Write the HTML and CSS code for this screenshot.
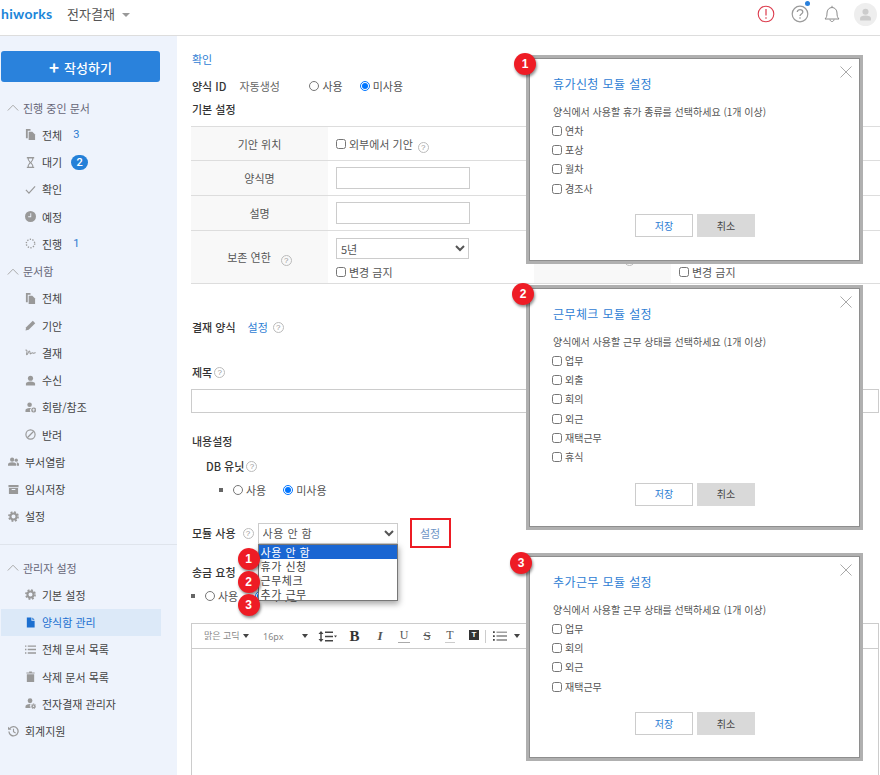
FILE: index.html
```html
<!DOCTYPE html>
<html lang="ko">
<head>
<meta charset="utf-8">
<title>전자결재</title>
<link rel="stylesheet" href="styles.css">
</head>
<body>
<svg class="sprite" xmlns="http://www.w3.org/2000/svg">
  <symbol id="i-docs" viewBox="0 0 12 12"><path d="M1 0h5v2H3v8H1z"/><path d="M4 3h4l3 3v6H4z"/></symbol>
  <symbol id="i-glass" viewBox="0 0 12 12"><path d="M2 0h8v1.500H9V3L7 6l2 3v1.500h1V12H2v-1.500h1V9l2-3-2-3V1.500H2zM4.200 1.500V3L6 5.400 7.800 3V1.500zM6 6.800 4.200 9v1.500h3.600V9z" fill-rule="evenodd"/></symbol>
  <symbol id="i-check" viewBox="0 0 12 12"><path d="M1 6.500 4.300 10 11 2.500" fill="none" stroke="currentColor" stroke-width="1.300"/></symbol>
  <symbol id="i-clock" viewBox="0 0 12 12"><path d="M6 0a6 6 0 1 0 0 12A6 6 0 0 0 6 0zm.8 6.800H3.500V5.800h2.300V2.500h1z" fill-rule="evenodd"/></symbol>
  <symbol id="i-spin" viewBox="0 0 12 12"><circle cx="6" cy="6" r="4.600" fill="none" stroke="currentColor" stroke-width="1.500" stroke-dasharray="1.400 1.500"/></symbol>
  <symbol id="i-pen" viewBox="0 0 12 12"><path d="M8.500.8 11.200 3.500 4 10.700.6 11.400 1.300 8z"/></symbol>
  <symbol id="i-sign" viewBox="0 0 12 12"><path d="M.5 3.500C2 3 2.500 4 2 6S1.500 9 2.500 8 4 4 5 4.500 5 8 6 7.500 7.500 6 8.500 6.500 10 7 11.500 6" fill="none" stroke="currentColor" stroke-width="1.100"/></symbol>
  <symbol id="i-user" viewBox="0 0 12 12"><circle cx="6" cy="3.500" r="2.800"/><path d="M1 11.500V9.500C1 8 3 7 6 7s5 1 5 2.500v2z"/></symbol>
  <symbol id="i-userplus" viewBox="0 0 12 12"><circle cx="5" cy="3" r="2.500"/><path d="M.5 11V9c0-1.500 2-2.500 4.500-2.500.7 0 1.200.1 1.700.2A3.200 3.200 0 0 0 6 11z"/><path d="M9.500 6a2.500 2.500 0 1 0 0 5.500 2.500 2.500 0 0 0 0-5.500zm.4 3.100v1.200h-.8V9.100H7.900v-.8h1.200V7.100h.8v1.200h1.200v.8z" fill-rule="evenodd"/></symbol>
  <symbol id="i-ban" viewBox="0 0 12 12"><circle cx="6" cy="6" r="5" fill="none" stroke="currentColor" stroke-width="1.300"/><path d="M2.500 9.500 9.500 2.500" stroke="currentColor" stroke-width="1.300"/></symbol>
  <symbol id="i-group" viewBox="0 0 12 12"><circle cx="4.500" cy="4" r="2.300"/><circle cx="9" cy="4.500" r="1.800"/><path d="M0 10.500V9c0-1.300 2-2.200 4.500-2.200S9 7.700 9 9v1.500z"/><path d="M9.800 10.500H12V8.800c0-1-1.100-1.700-2.800-1.700.4.500.6 1.100.6 1.800z"/></symbol>
  <symbol id="i-box" viewBox="0 0 12 12"><path d="M.5 1h11v2.500H.5zM1 4.300h10V11H1zM4 5.500v1h4v-1z" fill-rule="evenodd"/></symbol>
  <symbol id="i-gear" viewBox="0 0 12 12"><circle cx="6" cy="6" r="3.300" fill="none" stroke="currentColor" stroke-width="2.200"/><circle cx="6" cy="6" r="5" fill="none" stroke="currentColor" stroke-width="1.800" stroke-dasharray="2.100 1.830"/></symbol>
  <symbol id="i-file" viewBox="0 0 12 12"><path d="M2 .5h5v3.500h3.500v7.500H2z"/><path d="M8 .5l2.500 2.500H8z"/></symbol>
  <symbol id="i-list" viewBox="0 0 12 12"><path d="M0 1.500h1.500V3H0zM3 1.500h9V3H3zM0 5.200h1.500v1.500H0zM3 5.200h9v1.500H3zM0 9h1.500v1.500H0zM3 9h9v1.500H3z"/></symbol>
  <symbol id="i-trash" viewBox="0 0 12 12"><path d="M1.500 1.500h3V.5h3v1h3v1.300h-9zM2 3.500h8V12H2z"/></symbol>
  <symbol id="i-usergear" viewBox="0 0 12 12"><circle cx="5.500" cy="3" r="2.600"/><path d="M.5 11V9.200C.5 7.700 2.500 6.600 5.500 6.600l.7.000A3.200 3.200 0 0 0 6.300 11z"/><circle cx="9.300" cy="9" r="1.500" fill="none" stroke="currentColor" stroke-width="1.400"/><circle cx="9.300" cy="9" r="2.600" fill="none" stroke="currentColor" stroke-width="1" stroke-dasharray="1.300 .75"/></symbol>
  <symbol id="i-history" viewBox="0 0 12 12"><path d="M1.800 3A5 5 0 1 1 1 6" fill="none" stroke="currentColor" stroke-width="1.400"/><path d="M0 .8 3.800 4H0z"/><path d="M6 3v3.300l2.300 1.300" fill="none" stroke="currentColor" stroke-width="1.200"/></symbol>
  <symbol id="i-chev" viewBox="0 0 12 7"><path d="M.8 6.500 6 1.200l5.200 5.300" fill="none" stroke="currentColor"/></symbol>
  <symbol id="i-lineheight" viewBox="0 0 19 11"><path d="M3 0 .5 3h5zM3 11 .5 8h5zM2.300 3h1.400v5H2.300zM7 .5h8v1.500H7zM7 4.700h8v1.500H7zM7 9h8v1.500H7zM16 4.500h3L17.500 6.500z"/></symbol>
  <symbol id="i-ul" viewBox="0 0 16 12"><path d="M0 .5h2v2H0zM4 1h12v1H4zM0 5h2v2H0zM4 5.500h12v1H4zM0 9.500h2v2H0zM4 10h12v1H4z"/></symbol>
  <symbol id="i-x" viewBox="0 0 12 12"><path d="M.5.500l11 11M11.500.500l-11 11" fill="none" stroke="currentColor"/></symbol>
</svg>

<header class="topbar">
  <div class="brand">
    <span class="logo">hiworks</span>
    <span class="app">전자결재</span>
    <span class="caret"></span>
  </div>
  <div class="top-icons">
    <svg class="ti" viewBox="0 0 18 18"><circle cx="9" cy="9" r="7.800" fill="none" stroke="#dc3a4c" stroke-width="1.100"/><path d="M9 4v6.500M9 12.300v1.500" stroke="#dc3a4c" stroke-width="1.200"/></svg>
    <span class="help-top">
      <svg class="ti" viewBox="0 0 18 18"><circle cx="9" cy="9" r="7.800" fill="none" stroke="#9a9a9a" stroke-width="1.200"/><path d="M6.300 7c0-3.300 5.500-3.300 5.500 0 0 2-2.800 2-2.800 4M9 12.300v1.500" fill="none" stroke="#9a9a9a" stroke-width="1.300"/></svg>
      <i class="dot"></i>
    </span>
    <svg class="ti" viewBox="0 0 18 18"><path d="M2 14c1.500-1.500 2-3 2-6s2-5.500 5-5.500 5 2.500 5 5.500.5 4.500 2 6zM7 14.500c.2 2.700 3.800 2.700 4 0M9 .8v1.700" fill="none" stroke="#8c8c8c"/></svg>
    <span class="avatar"><svg viewBox="0 0 12 12"><use href="#i-user"/></svg></span>
  </div>
</header>

<div class="shell">
  <aside class="side">
    <button class="write"><span class="plus">+</span>작성하기</button>
    <nav class="nav">
      <div class="sec"><svg class="chev"><use href="#i-chev"/></svg>진행 중인 문서</div>
      <a class="item"><svg class="ic"><use href="#i-docs"/></svg>전체<span class="num">3</span></a>
      <a class="item"><svg class="ic"><use href="#i-glass"/></svg>대기<span class="pill">2</span></a>
      <a class="item"><svg class="ic"><use href="#i-check"/></svg>확인</a>
      <a class="item"><svg class="ic"><use href="#i-clock"/></svg>예정</a>
      <a class="item"><svg class="ic"><use href="#i-spin"/></svg>진행<span class="num">1</span></a>
      <div class="sec"><svg class="chev"><use href="#i-chev"/></svg>문서함</div>
      <a class="item"><svg class="ic"><use href="#i-docs"/></svg>전체</a>
      <a class="item"><svg class="ic"><use href="#i-pen"/></svg>기안</a>
      <a class="item"><svg class="ic"><use href="#i-sign"/></svg>결재</a>
      <a class="item"><svg class="ic"><use href="#i-user"/></svg>수신</a>
      <a class="item"><svg class="ic"><use href="#i-userplus"/></svg>회람/참조</a>
      <a class="item"><svg class="ic"><use href="#i-ban"/></svg>반려</a>
      <a class="top"><svg class="ic"><use href="#i-group"/></svg>부서열람</a>
      <a class="top"><svg class="ic"><use href="#i-box"/></svg>임시저장</a>
      <a class="top"><svg class="ic"><use href="#i-gear"/></svg>설정</a>
    </nav>
    <nav class="nav admin">
      <div class="sec"><svg class="chev"><use href="#i-chev"/></svg>관리자 설정</div>
      <a class="item"><svg class="ic"><use href="#i-gear"/></svg>기본 설정</a>
      <a class="item active"><svg class="ic"><use href="#i-file"/></svg>양식함 관리</a>
      <a class="item"><svg class="ic"><use href="#i-list"/></svg>전체 문서 목록</a>
      <a class="item"><svg class="ic"><use href="#i-trash"/></svg>삭제 문서 목록</a>
      <a class="item"><svg class="ic"><use href="#i-usergear"/></svg>전자결재 관리자</a>
      <a class="top"><svg class="ic"><use href="#i-history"/></svg>회계지원</a>
    </nav>
  </aside>

  <main class="main">
    <a class="link r-confirm">확인</a>
    <div class="row r-id">
      <b class="lbl">양식 ID</b><span class="auto">자동생성</span>
      <label class="opt o-first"><input type="radio" name="a">사용</label>
      <label class="opt"><input type="radio" name="a" checked>미사용</label>
    </div>
    <div class="row r-basic"><b class="lbl">기본 설정</b></div>

    <table class="form">
      <colgroup><col class="c1"><col class="c2"><col class="c3"><col class="c4"></colgroup>
      <tr class="h1">
        <th>기안 위치</th>
        <td class="pushdown"><label class="chk"><input type="checkbox">외부에서 기안</label><i class="q q-gap">?</i></td>
        <th></th><td></td>
      </tr>
      <tr class="h2"><th>양식명</th><td><input class="txt" type="text"></td><th></th><td></td></tr>
      <tr class="h3"><th>설명</th><td><input class="txt" type="text"></td><th></th><td></td></tr>
      <tr class="h4">
        <th>보존 연한<i class="q q-wide">?</i></th>
        <td class="retain">
          <select class="sel year"><option>5년</option></select>
          <label class="chk c-below"><input type="checkbox">변경 금지</label>
        </td>
        <th>보존 연한<i class="q q-wide">?</i></th>
        <td class="retain retain-2"><label class="chk c-below"><input type="checkbox">변경 금지</label></td>
      </tr>
    </table>

    <div class="row r-approval"><b class="lbl">결재 양식</b><a class="link l-set">설정</a><i class="q q-gap">?</i></div>
    <div class="row r-title"><b class="lbl">제목</b><i class="q q-near">?</i></div>
    <input class="title-in" type="text">
    <div class="row r-content"><b class="lbl">내용설정</b></div>
    <div class="row r-db"><b class="lbl">DB 유닛</b><i class="q q-near">?</i></div>
    <div class="row r-dbopt">
      <i class="bullet"></i>
      <label class="opt"><input type="radio" name="b">사용</label>
      <label class="opt"><input type="radio" name="b" checked>미사용</label>
    </div>
    <div class="row r-module">
      <b class="lbl">모듈 사용</b><i class="q q-mod">?</i>
      <div class="sel-wrap">
        <select class="sel mod"><option>사용 안 함</option></select>
        <ul class="drop">
          <li class="on">사용 안 함</li>
          <li>휴가 신청</li>
          <li>근무체크</li>
          <li>추가 근무</li>
        </ul>
        <span class="badge b-d1">1</span>
        <span class="badge b-d2">2</span>
        <span class="badge b-d3">3</span>
      </div>
      <a class="link redbox">설정</a>
    </div>
    <div class="row r-send"><b class="lbl">송금 요청</b></div>
    <div class="row r-sendopt">
      <i class="bullet"></i>
      <label class="opt"><input type="radio" name="c">사용</label>
      <label class="opt"><input type="radio" name="c" checked>미사용</label>
    </div>

    <div class="editor">
      <div class="tools">
        <span class="t-font">맑은 고딕</span><i class="tri t-a"></i>
        <span class="t-size">16px</span><i class="tri t-b"></i>
        <svg class="t-lh"><use href="#i-lineheight"/></svg>
        <span class="t b">B</span><span class="t it">I</span><span class="t un">U</span><span class="t st">S</span><span class="t tt">T</span><span class="t boxed">T</span>
        <i class="sep"></i>
        <svg class="t-ul"><use href="#i-ul"/></svg><i class="tri t-c"></i>
        <svg class="t-more"><use href="#i-ul"/></svg>
      </div>
      <div class="edit-body"></div>
    </div>
  </main>
</div>

<section class="modal m1">
  <span class="badge b-m">1</span>
  <svg class="close"><use href="#i-x"/></svg>
  <h2>휴가신청 모듈 설정</h2>
  <p>양식에서 사용할 휴가 종류를 선택하세요 (1개 이상)</p>
  <label class="mi"><input type="checkbox">연차</label>
  <label class="mi"><input type="checkbox">포상</label>
  <label class="mi"><input type="checkbox">월차</label>
  <label class="mi"><input type="checkbox">경조사</label>
  <div class="btns"><button class="save">저장</button><button class="cancel">취소</button></div>
</section>

<section class="modal m2">
  <span class="badge b-m">2</span>
  <svg class="close"><use href="#i-x"/></svg>
  <h2>근무체크 모듈 설정</h2>
  <p>양식에서 사용할 근무 상태를 선택하세요 (1개 이상)</p>
  <label class="mi"><input type="checkbox">업무</label>
  <label class="mi"><input type="checkbox">외출</label>
  <label class="mi"><input type="checkbox">회의</label>
  <label class="mi"><input type="checkbox">외근</label>
  <label class="mi"><input type="checkbox">재택근무</label>
  <label class="mi"><input type="checkbox">휴식</label>
  <div class="btns"><button class="save">저장</button><button class="cancel">취소</button></div>
</section>

<section class="modal m3">
  <span class="badge b-m">3</span>
  <svg class="close"><use href="#i-x"/></svg>
  <h2>추가근무 모듈 설정</h2>
  <p>양식에서 사용할 근무 상태를 선택하세요 (1개 이상)</p>
  <label class="mi"><input type="checkbox">업무</label>
  <label class="mi"><input type="checkbox">회의</label>
  <label class="mi"><input type="checkbox">외근</label>
  <label class="mi"><input type="checkbox">재택근무</label>
  <div class="btns"><button class="save">저장</button><button class="cancel">취소</button></div>
</section>
</body>
</html>
```

FILE: styles.css
```css
* { box-sizing: border-box; }
html, body { margin: 0; height: 775px; overflow: hidden; }
body {
  position: relative;
  background: #fff;
  color: #444;
  font: 11px/18px "Noto Sans CJK KR", "Noto Sans", sans-serif;
}
.sprite { display: none; }
svg { fill: currentColor; }

/* top bar */
.topbar {
  height: 36px;
  border-bottom: 1px solid #ddd;
  display: flex;
  justify-content: space-between;
  padding: 0 3px 7px 1px;
  align-items: center;
}
.brand { display: flex; align-items: center; }
.logo { font: 700 14px/20px Lato, "Open Sans", sans-serif; color: #1c86d9; width: 66px; letter-spacing: .3px; }
.app { font-size: 13px; color: #555; line-height: 20px; }
.caret { width: 0; height: 0; margin: 2px 0 0 7px; border: 4px solid transparent; border-top: 4px solid #999; border-bottom: 0; }
.top-icons { display: flex; align-items: center; }
.ti { width: 18px; height: 18px; display: block; }
.top-icons > .ti:first-child { margin-right: 16px; }
.help-top { position: relative; margin-right: 14px; }
.dot { position: absolute; right: -1px; top: -4px; width: 5px; height: 5px; border-radius: 50%; background: #2a80dc; }
.avatar { width: 23px; height: 23px; margin-left: 13px; border-radius: 50%; background: #eee; color: #ccc; display: flex; align-items: center; justify-content: center; }
.avatar svg { width: 13px; height: 13px; }

/* layout */
.shell { display: flex; height: 739px; }
.side { width: 177px; flex: none; background: #eef3fc; padding-top: 15px; }
.main { flex: 1; min-width: 0; padding: 14px 0 0 14px; overflow: hidden; }

/* sidebar */
.write {
  display: block; width: 159px; height: 31px; margin: 0 0 12px 1px;
  background: #2a82dc; color: #fff; border: 0; border-radius: 3px;
  font: 500 13px/31px "Noto Sans CJK KR", sans-serif; padding: 0;
}
.plus { font-size: 17px; font-weight: 700; margin-right: 5px; vertical-align: -1px; }
.nav { font-size: 11px; }
.sec, .item, .top { display: flex; align-items: center; height: 27.25px; width: 160px; margin-left: 1px; color: #444; }
.sec { padding-left: 6px; color: #667; }
.chev { width: 12px; height: 7px; margin-right: 4px; color: #aaa; }
.item { padding-left: 24px; }
.top { padding-left: 7px; }
.ic { width: 11px; height: 11px; color: #999; flex: none; margin-right: 6px; }
.num { margin-left: 11px; color: #2a7ad0; font-family: Roboto, sans-serif; }
.pill { margin-left: 9px; width: 17px; height: 15px; line-height: 15px; border-radius: 8px; background: #2480d8; color: #fff; text-align: center; font: 500 11px/15px Roboto, sans-serif; }
.admin { margin-top: 13.5px; border-top: 1px solid #dfe4ec; padding-top: 9.5px; }
.active { background: #dce9f8; color: #1b6fd0; }
.active .ic { color: #1b6fd0; }

/* form rows */
.row { display: flex; align-items: center; height: 18px; }
.lbl { font-weight: 500; color: #333; }
.link { color: #2f80d4; }
.r-confirm { display: block; height: 18px; margin-left: 1px; }
.r-id { margin: 9px 0 0 1px; }
.auto { margin-left: 13px; color: #666; width: 70px; }
.opt { display: flex; align-items: center; color: #555; margin-right: 17px; }
.opt input { appearance: auto; width: 10px; height: 10px; margin: 0 3px 0 0; }
.r-basic { margin: 5px 0 0 1px; }

/* table */
.form { table-layout: fixed; border-collapse: collapse; width: 689px; margin-top: 8px; border-top: 1px solid #ddd; }
.c1, .c3 { width: 137px; }
.c2 { width: 206px; }
.c4 { width: 209px; }
.form th, .form td { border-bottom: 1px solid #ddd; padding: 0; font-weight: 400; }
.form th { background: #f8f8f8; text-align: center; color: #555; }
.form td { padding-left: 8px; }
.h1 { height: 34px; }
.h2 { height: 35px; }
.h3 { height: 35px; }
.h4 { height: 53px; }
.pushdown { padding-top: 2px; }
.chk { display: inline-flex; align-items: center; color: #555; }
.chk input, .mi input { width: 10px; height: 10px; margin: 0 3px 0 0; }
.c-below { display: flex; margin-top: 4px; }
.form .retain { vertical-align: top; padding-top: 7px; }
.form .retain-2 { padding-top: 28px; }
.txt { display: block; width: 134px; height: 22px; border: 1px solid #ccc; background: #fff; }
.sel {
  display: block; height: 21px; background: #fff; border: 1px solid #ccc; color: #555;
  font: 11px "Noto Sans CJK KR", sans-serif; border-radius: 0; padding: 0;
}
.year { width: 133px; }
.mod { width: 140px; letter-spacing: .5px; }

/* help */
.q {
  display: inline-block; width: 11px; height: 11px; border-radius: 50%; border: 1px solid #bbb; color: #999;
  font: 8px/9px "Liberation Sans", sans-serif; text-align: center; font-style: normal; flex: none;
}
.q-gap { margin-left: 5px; vertical-align: -1px; }
.q-wide { margin-left: 10px; vertical-align: -1px; }
.q-near { margin-left: 2px; }
.q-mod { margin-left: 7px; }

/* lower form */
.r-approval { margin: 34px 0 0 1px; }
.l-set { margin-left: 12px; }
.r-title { margin: 27px 0 0 1px; }
.title-in { display: block; width: 688px; height: 24px; margin-top: 8px; border: 1px solid #ccc; }
.r-content { margin: 19px 0 0 1px; }
.r-db { margin: 7px 0 0 15px; }
.r-dbopt { margin: 6px 0 0 28px; }
.bullet { width: 4px; height: 4px; background: #666; margin-right: 10px; flex: none; }
.r-module { height: 30px; margin: 19px 0 0 1px; }
.sel-wrap { position: relative; margin-left: 4px; }
.redbox {
  display: flex; align-items: center; justify-content: center;
  width: 41px; height: 30px; margin-left: 12px; border: 2px solid #ed1c24; color: #6d93c5;
}
.drop {
  position: absolute; left: 0; top: 21px; width: 140px; height: 57px; margin: 0; padding: 0;
  list-style: none; background: #fff; border: 1px solid #777; color: #444;
  box-shadow: 1px 3px 6px rgba(0,0,0,.35); font-size: 11px; line-height: 14px; letter-spacing: .5px;
}
.drop li { height: 14px; padding-left: 2px; }
.drop .on { background: #1a66d2; color: #fff; }
.badge {
  position: absolute; width: 22px; height: 22px; border-radius: 50%; background: #ee1c25; color: #fff;
  font: 700 12px/22px "Liberation Sans", sans-serif; text-align: center; box-shadow: 1px 2px 3px rgba(0,0,0,.45);
}
.b-d1 { left: -20px; top: 25px; }
.b-d2 { left: -20px; top: 48px; }
.b-d3 { left: -20px; top: 71px; }
.r-send { margin: 15px 0 0 1px; }
.r-sendopt { margin: 6px 0 0 0; }

/* editor */
.editor { width: 688px; margin-top: 18px; border: 1px solid #ccc; height: 160px; }
.tools { height: 25px; border-bottom: 1px solid #ccc; display: flex; align-items: center; color: #555; white-space: nowrap; overflow: hidden; }
.t-font { font-size: 9px; color: #888; margin-left: 12px; width: 39px; }
.tri { width: 0; height: 0; border: 3px solid transparent; border-top: 4px solid #444; border-bottom: 0; flex: none; }
.t-a { margin-right: 14px; }
.t-size { font: 9px "Noto Sans", sans-serif; color: #888; width: 39px; }
.t-b { margin-right: 10px; }
.t-lh { width: 19px; height: 11px; margin-right: 9px; color: #444; flex: none; }
.t { font-family: "Liberation Serif", serif; color: #555; flex: none; text-align: center; }
.b { font-weight: 700; font-size: 15px; width: 17px; margin-right: 12px; color: #333; }
.it { font-style: italic; font-weight: 700; font-size: 13px; width: 10px; margin-right: 13px; }
.un { font-size: 12px; width: 12px; margin-right: 11px; border-bottom: 1px solid #aaa; line-height: 13px; }
.st { font-size: 13px; width: 12px; margin-right: 12px; text-decoration: line-through; }
.tt { font-size: 12px; width: 10px; margin-right: 14px; border-bottom: 1px solid #ccc; line-height: 13px; }
.boxed { width: 10px; height: 10px; background: #333; color: #fff; font: 700 8px/10px "Liberation Sans", sans-serif; margin-top: -2px; margin-right: 6px; }
.sep { width: 1px; height: 13px; background: #ccc; margin-right: 7px; flex: none; }
.t-ul { width: 14px; height: 12px; color: #444; margin-right: 7px; flex: none; }
.t-c { margin-right: 13px; }
.t-more { width: 14px; height: 12px; color: #444; flex: none; }

/* annotated modals */
.modal {
  position: absolute; left: 526px; width: 337px; padding: 17px 0 0 23px; background: #fff;
  border: 3px solid #b0b0b0; box-shadow: inset 0 0 0 1px #8e8e8e;
  font-size: 10px;
}
.m1 { top: 55px; height: 209px; }
.m2 { top: 285px; height: 245px; }
.m3 { top: 553px; height: 208px; }
.b-m { left: -15px; top: -5px; }
.m2 .b-m { left: -17px; }
.m3 .b-m { left: -19px; top: -4px; }
.close { position: absolute; right: 8px; top: 8px; width: 12px; height: 12px; color: #aaa; }
.modal h2 { margin: 0 0 0 1px; font-size: 12px; font-weight: 400; line-height: 18px; color: #2f80d4; letter-spacing: .4px; }
.modal p { margin: 10px 0 0 1px; height: 18px; color: #555; }
.mi { display: flex; align-items: center; height: 19.3px; color: #555; }
.mi input { margin-right: 3px; }
.btns { display: flex; gap: 4px; justify-content: center; margin: 16px 0 0 -23px; padding-left: 1px; }
.btns button { width: 58px; height: 23px; font: 10px/20px "Noto Sans CJK KR", sans-serif; padding: 0; border-radius: 0; }
.save { background: #fff; border: 1px solid #ccc; color: #2f80d4; }
.cancel { background: #d9d9d9; border: 1px solid #d9d9d9; color: #444; }
```
